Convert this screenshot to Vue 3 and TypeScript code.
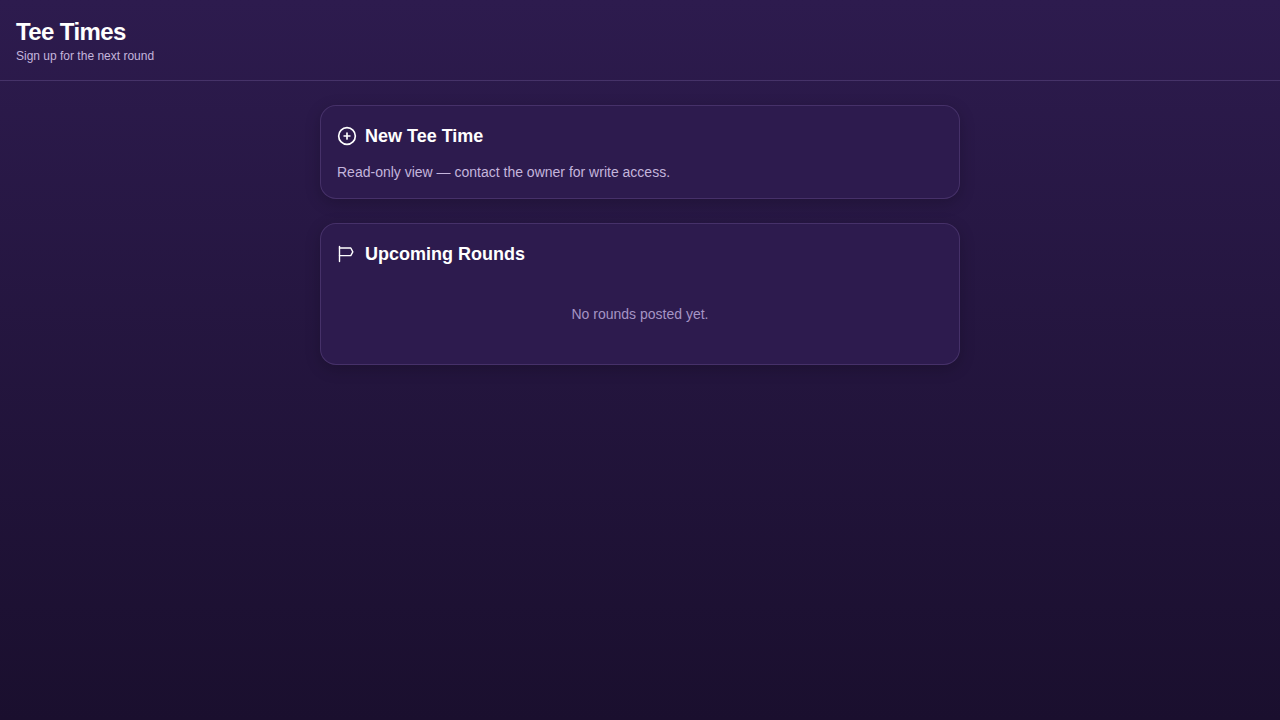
<script setup lang="ts">
const title = "Tee Times";
</script>

<template>
  <div class="page">
    <header class="top">
      <h1>{{ title }}</h1>
      <p>Sign up for the next round</p>
    </header>
    <main class="main">
      <section class="card">
        <h2>
          <svg viewBox="0 0 24 24" class="icon" fill="none" stroke="currentColor" stroke-width="2" stroke-linecap="round" stroke-linejoin="round">
            <circle cx="12" cy="12" r="10" />
            <path d="M8.5 12h7M12 8.5v7" />
          </svg>
          New Tee Time
        </h2>
        <p class="note">Read-only view — contact the owner for write access.</p>
      </section>
      <section class="card">
        <h2>
          <svg viewBox="0 0 20 20" class="icon" fill="none" stroke="currentColor" stroke-width="1.4" stroke-linecap="round" stroke-linejoin="round">
            <path d="M2.5 2.5v15" />
            <path d="M2.5 4H13.8L15.8 7.8 13.8 11.6H2.5" />
          </svg>
          Upcoming Rounds
        </h2>
        <p class="empty">No rounds posted yet.</p>
      </section>
    </main>
  </div>
</template>

<style>
body { margin: 0; }
</style>

<style scoped>
.page {
  min-height: 720px;
  background: linear-gradient(180deg, #2d1b4e 0%, #1a0f2e 100%);
  font-family: "Liberation Sans", Arial, sans-serif;
  color: #fff;
}
.top {
  box-sizing: border-box;
  height: 81px;
  padding: 16px;
  border-bottom: 1px solid rgba(168, 139, 214, 0.22);
}
h1 {
  margin: 0;
  font-size: 24px;
  line-height: 32px;
  font-weight: 700;
  letter-spacing: -0.6px;
}
.top p {
  margin: 0;
  font-size: 12px;
  line-height: 16px;
  color: #c4b5dc;
}
.main {
  width: 640px;
  margin: 0 auto;
  padding-top: 24px;
  display: flex;
  flex-direction: column;
  gap: 24px;
}
.card {
  padding: 16px;
  border: 1px solid rgba(168, 139, 214, 0.2);
  border-radius: 16px;
  background: #2d1b4e;
  box-shadow: 0 4px 16px rgba(0, 0, 0, 0.2);
}
h2 {
  margin: 0 0 12px;
  display: flex;
  align-items: center;
  gap: 8px;
  font-size: 18px;
  line-height: 28px;
  font-weight: 700;
}
.icon {
  width: 20px;
  height: 20px;
  flex: none;
}
.note {
  margin: 0;
  font-size: 14px;
  line-height: 20px;
  color: #c4b5dc;
}
.empty {
  margin: 0;
  padding: 24px 0;
  text-align: center;
  font-size: 14px;
  line-height: 20px;
  color: #a594c4;
}
</style>
